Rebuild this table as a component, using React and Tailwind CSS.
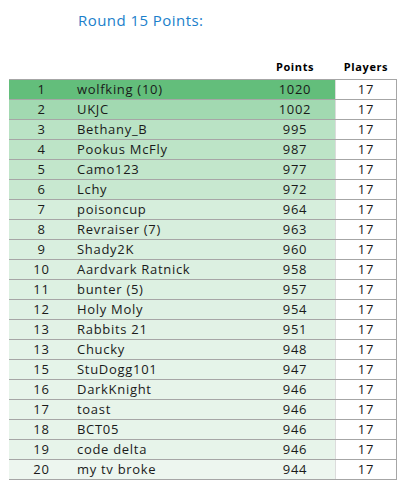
import React from 'react';

const rows = [
  [1, 'wolfking (10)', 1020, '#63be7b'],
  [2, 'UKJC', 1002, '#a2d9b1'],
  [3, 'Bethany_B', 995, '#bae3c5'],
  [4, 'Pookus McFly', 987, '#bde4c7'],
  [5, 'Camo123', 977, '#c2e6cb'],
  [6, 'Lchy', 972, '#c8e8d0'],
  [7, 'poisoncup', 964, '#d6eedc'],
  [8, 'Revraiser (7)', 963, '#d7eedd'],
  [9, 'Shady2K', 960, '#d9efdf'],
  [10, 'Aardvark Ratnick', 958, '#dcf0e1'],
  [11, 'bunter (5)', 957, '#ddf1e2'],
  [12, 'Holy Moly', 954, '#dff1e4'],
  [13, 'Rabbits 21', 951, '#e2f2e6'],
  [13, 'Chucky', 948, '#e4f3e8'],
  [15, 'StuDogg101', 947, '#e5f4e9'],
  [16, 'DarkKnight', 946, '#e7f4ea'],
  [17, 'toast', 946, '#e7f4ea'],
  [18, 'BCT05', 946, '#e7f4ea'],
  [19, 'code delta', 946, '#e7f4ea'],
  [20, 'my tv broke', 944, '#edf6ef'],
];

const App = () => {
  return (
    <div className="w-[407px] h-[491px] bg-white text-[#1a1a1a]" style={{ fontFamily: '"Open Sans", "Noto Sans", sans-serif' }}>
      <div className="h-[59px] pt-[10px] pl-[78px]">
        <h1 className="text-[15px] leading-[20px] tracking-[0.45px] text-[#1b7fcb]">Round 15 Points:</h1>
      </div>

      <div className="ml-[9px] w-[388px]">
        <div className="grid grid-cols-[65px_181px_80px_62px] h-[20px] text-[11px] leading-[16px] font-bold tracking-[0.6px] text-black">
          <div />
          <div />
          <div className="text-center">Points</div>
          <div className="text-center">Players</div>
        </div>

        <div className="border-t border-[#a6a6a6]">
          {rows.map(([rank, name, points, color], i) => (
            <div key={i} className="grid grid-cols-[326px_62px] h-[20px] border-b border-[#a6a6a6] text-[13px] leading-[19px] tracking-[0.7px]">
              <div className="grid grid-cols-[65px_181px_80px]" style={{ backgroundColor: color }}>
                <div className="text-center">{rank}</div>
                <div className="pl-[3px] whitespace-nowrap">{name}</div>
                <div className="text-center">{points}</div>
              </div>
              <div className="bg-white text-center border-l border-[#dcdcdc] border-r border-r-[#a6a6a6]">17</div>
            </div>
          ))}
        </div>
      </div>
    </div>
  );
};

export default App;
